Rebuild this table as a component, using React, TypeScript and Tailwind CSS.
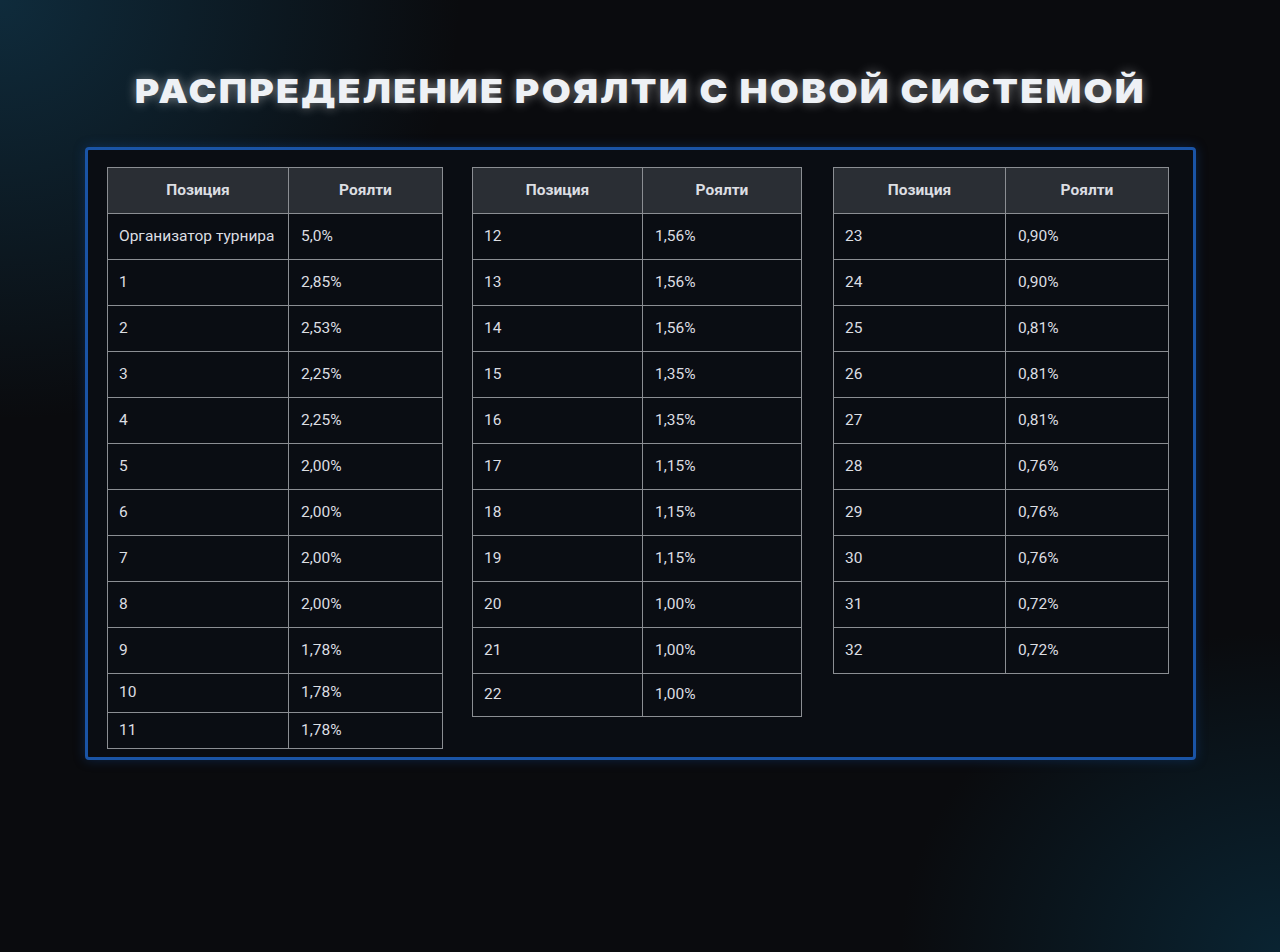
import React from 'react'

type Row = { pos: string; value: string; h?: string }

const tableOne: Row[] = [
  { pos: 'Организатор турнира', value: '5,0%' },
  { pos: '1', value: '2,85%' },
  { pos: '2', value: '2,53%' },
  { pos: '3', value: '2,25%' },
  { pos: '4', value: '2,25%' },
  { pos: '5', value: '2,00%' },
  { pos: '6', value: '2,00%' },
  { pos: '7', value: '2,00%' },
  { pos: '8', value: '2,00%' },
  { pos: '9', value: '1,78%' },
  { pos: '10', value: '1,78%', h: 'h-[39px]' },
  { pos: '11', value: '1,78%', h: 'h-[36px]' },
]

const tableTwo: Row[] = [
  { pos: '12', value: '1,56%' },
  { pos: '13', value: '1,56%' },
  { pos: '14', value: '1,56%' },
  { pos: '15', value: '1,35%' },
  { pos: '16', value: '1,35%' },
  { pos: '17', value: '1,15%' },
  { pos: '18', value: '1,15%' },
  { pos: '19', value: '1,15%' },
  { pos: '20', value: '1,00%' },
  { pos: '21', value: '1,00%' },
  { pos: '22', value: '1,00%', h: 'h-[43px]' },
]

const tableThree: Row[] = [
  { pos: '23', value: '0,90%' },
  { pos: '24', value: '0,90%' },
  { pos: '25', value: '0,81%' },
  { pos: '26', value: '0,81%' },
  { pos: '27', value: '0,81%' },
  { pos: '28', value: '0,76%' },
  { pos: '29', value: '0,76%' },
  { pos: '30', value: '0,76%' },
  { pos: '31', value: '0,72%' },
  { pos: '32', value: '0,72%' },
]

function RoyaltyTable({ rows, cols, width }: { rows: Row[]; cols: string; width: string }) {
  return (
    <div className={`${width} shrink-0 border-l border-t border-[#8b8e93] text-[15.5px] text-[#dcdee2]`}>
      {/* Header */}
      <div className={`grid ${cols} h-[46px] bg-[#2a2e34] font-bold`}>
        <div className="flex items-center justify-center border-r border-b border-[#8b8e93]">Позиция</div>
        <div className="flex items-center justify-center border-r border-b border-[#8b8e93]">Роялти</div>
      </div>
      {rows.map((r) => (
        <div key={r.pos} className={`grid ${cols} ${r.h ?? 'h-[46px]'} bg-[#0a0d13]`}>
          <div className="flex items-center pl-[11px] border-r border-b border-[#8b8e93] whitespace-nowrap">{r.pos}</div>
          <div className="flex items-center pl-[12px] border-r border-b border-[#8b8e93]">{r.value}</div>
        </div>
      ))}
    </div>
  )
}

export default function App() {
  return (
    <div
      className="w-[1280px] h-[952px] overflow-hidden bg-[#0a0b0e] bg-[radial-gradient(ellipse_460px_420px_at_0%_0%,rgba(20,75,105,0.5),transparent),radial-gradient(ellipse_380px_320px_at_100%_100%,rgba(10,60,85,0.5),transparent)]"
      style={{ fontFamily: 'Roboto, "Noto Sans", sans-serif' }}
    >
      {/* Title */}
      <div className="h-[147px] pt-[71px] flex justify-center">
        <h1
          className="text-[33px] leading-[40px] font-black tracking-[2px] text-[#eef1f5] [text-shadow:0_0_10px_rgba(255,255,255,0.45)] origin-center scale-x-[1.135] whitespace-nowrap"
          style={{ fontFamily: 'Inter, "Noto Sans", sans-serif' }}
        >
          РАСПРЕДЕЛЕНИЕ РОЯЛТИ С НОВОЙ СИСТЕМОЙ
        </h1>
      </div>

      {/* Panel */}
      <div className="ml-[85px] w-[1111px] h-[613px] rounded-[4px] border-[3px] border-[#1a54a6] bg-[#0a0d13] shadow-[0_0_12px_rgba(20,80,170,0.35)]">
        <div className="flex items-start pl-[19px] pt-[17px]">
          <RoyaltyTable rows={tableOne} cols="grid-cols-[181px_154px]" width="w-[336px]" />
          <div className="w-[29px] shrink-0" />
          <RoyaltyTable rows={tableTwo} cols="grid-cols-[170px_159px]" width="w-[330px]" />
          <div className="w-[31px] shrink-0" />
          <RoyaltyTable rows={tableThree} cols="grid-cols-[172px_163px]" width="w-[336px]" />
        </div>
      </div>
    </div>
  )
}
